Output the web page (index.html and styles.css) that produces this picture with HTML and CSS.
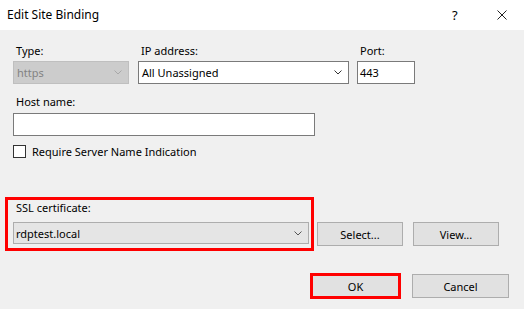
FILE: index.html
```html
<!DOCTYPE html>
<html lang="en">
<head>
  <meta charset="UTF-8" />
  <title>Edit Site Binding</title>
  <link rel="stylesheet" href="styles.css">
</head>
<body>
  <div class="dialog">
    <div class="titlebar">
      <span class="title">Edit Site Binding</span>
      <span class="help">?</span>
      <span class="close">
        <svg width="10" height="10" viewBox="0 0 10 10"><path d="M0.5 0.5 L9.5 9.5 M9.5 0.5 L0.5 9.5" stroke="#222" stroke-width="1" fill="none"/></svg>
      </span>
    </div>

    <div class="content">
      <div class="row-top">
        <div class="field type-field">
          <div class="label">Type:</div>
          <div class="combo disabled">
            <span>https</span>
            <svg class="chev" width="8" height="5" viewBox="0 0 8 5"><path d="M0.5 0.5 L4 4 L7.5 0.5" stroke="#a8a8a8" fill="none"/></svg>
          </div>
        </div>
        <div class="field ip-field">
          <div class="label">IP address:</div>
          <div class="combo">
            <span>All Unassigned</span>
            <svg class="chev" width="8" height="5" viewBox="0 0 8 5"><path d="M0.5 0.5 L4 4 L7.5 0.5" stroke="#333" fill="none"/></svg>
          </div>
        </div>
        <div class="field port-field">
          <div class="label">Port:</div>
          <div class="textbox">443</div>
        </div>
      </div>

      <div class="field host-field">
        <div class="label">Host name:</div>
        <div class="textbox"></div>
      </div>

      <div class="check-row">
        <span class="checkbox"></span>
        <span>Require Server Name Indication</span>
      </div>

      <div class="ssl-row">
        <div class="ssl-box">
          <div class="label">SSL certificate:</div>
          <div class="combo readonly">
            <span>rdptest.local</span>
            <svg class="chev" width="8" height="5" viewBox="0 0 8 5"><path d="M0.5 0.5 L4 4 L7.5 0.5" stroke="#555" fill="none"/></svg>
          </div>
        </div>
        <button class="btn select-btn">Select...</button>
        <button class="btn view-btn">View...</button>
      </div>

      <div class="actions">
        <button class="btn ok-btn">OK</button>
        <button class="btn cancel-btn">Cancel</button>
      </div>
    </div>
  </div>
</body>
</html>
```

FILE: styles.css
```css
body {
  margin: 0;
  font-family: "Noto Sans", "Open Sans", sans-serif;
  font-size: 11px;
  color: #000;
  background: #f0f0f0;
}
.dialog {
  width: 524px;
  height: 309px;
  background: #f0f0f0;
  overflow: hidden;
}
.titlebar {
  height: 30px;
  background: #fff;
  display: flex;
  align-items: center;
  padding-left: 7px;
}
.title {
  flex: 1;
  font-size: 12px;
  line-height: 16px;
}
.help {
  width: 8px;
  margin-right: 37px;
  font-size: 13px;
}
.close {
  width: 10px;
  height: 10px;
  margin-right: 17px;
  display: flex;
}
.content {
  padding: 13px 0 0 13px;
}
.label {
  line-height: 16px;
  padding-left: 3px;
  margin-bottom: 2px;
  white-space: nowrap;
}
.row-top {
  display: flex;
}
.type-field {
  width: 116px;
}
.ip-field {
  width: 211px;
  margin-left: 9px;
}
.port-field {
  width: 58px;
  margin-left: 8px;
}
.combo {
  height: 23px;
  box-sizing: border-box;
  border: 1px solid #7a7a7a;
  background: #fff;
  display: flex;
  align-items: center;
  padding: 0 6px 0 3px;
}
.combo span {
  flex: 1;
}
.combo.disabled {
  background: #cccccc;
  border-color: #bfbfbf;
  color: #838383;
}
.combo.readonly {
  height: 22px;
  background: #e5e5e5;
  border-color: #adadad;
  padding-left: 2px;
}
.textbox {
  height: 23px;
  box-sizing: border-box;
  border: 1px solid #7a7a7a;
  background: #fff;
  display: flex;
  align-items: center;
  padding-left: 2px;
}
.host-field {
  width: 302px;
  margin-top: 10px;
}
.host-field .label {
  margin-bottom: 3px;
}
.check-row {
  display: flex;
  align-items: center;
  height: 16px;
  margin-top: 7px;
}
.checkbox {
  width: 13px;
  height: 13px;
  box-sizing: border-box;
  border: 1px solid #333;
  background: #fff;
  margin-right: 6px;
}
.ssl-row {
  display: flex;
  align-items: flex-end;
  margin-top: 38px;
  margin-left: -8px;
}
.ssl-box {
  width: 309px;
  box-sizing: border-box;
  border: 3px solid #ff0000;
  padding: 0 2px 4px 5px;
}
.ssl-box .label {
  margin-bottom: 6px;
}
.btn {
  font-family: inherit;
  font-size: 11px;
  color: #000;
  background: #e1e1e1;
  border: 1px solid #adadad;
  height: 24px;
  padding: 0;
}
.select-btn {
  width: 86px;
  margin-left: 3px;
  margin-bottom: 5px;
}
.view-btn {
  width: 86px;
  margin-left: 10px;
  margin-bottom: 5px;
}
.actions {
  display: flex;
  justify-content: flex-end;
  align-items: center;
  margin-top: 22px;
  padding-right: 15px;
}
.ok-btn {
  width: 91px;
  height: 26px;
  border: 3px solid #ff0000;
}
.cancel-btn {
  width: 97px;
  margin-left: 11px;
}
```
